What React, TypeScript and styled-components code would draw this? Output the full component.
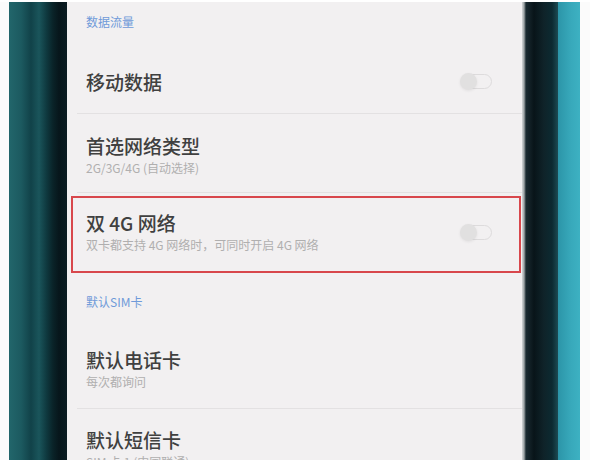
import React from "react";
import styled, { createGlobalStyle } from "styled-components";

const GlobalStyle = createGlobalStyle`
  html, body { margin: 0; padding: 0; background: #fff; }
  body { font-family: "Noto Sans CJK SC", "Noto Sans", sans-serif; }
  #root { width: 590px; height: 460px; overflow: hidden; }
`;

const Page = styled.div`
  width: 590px;
  height: 460px;
  box-sizing: border-box;
  padding-top: 2px;
  display: flex;
  background: #fff;
  overflow: hidden;
`;

const WhiteStrip = styled.div<{ $w: number }>`
  flex: none;
  width: ${(p) => p.$w}px;
  background: #fbfbfb;
`;

const LeftBezel = styled.div`
  flex: none;
  width: 58px;
  background: linear-gradient(
    to right,
    #22666b 0px,
    #1c5a60 12px,
    #114249 22px,
    #1a555b 30px,
    #0e373d 38px,
    #0a2328 44px,
    #07161b 50px,
    #0b1c22 58px
  );
`;

const RightBezel = styled.div`
  flex: none;
  width: 36px;
  background: linear-gradient(
    to right,
    #d4d7d8 0px,
    #9ea4a6 2px,
    #1a2a30 4px,
    #081419 12px,
    #0f2329 22px,
    #0c2a31 30px,
    #1c4a52 36px
  );
`;

const TealEdge = styled.div`
  flex: none;
  width: 22px;
  background: linear-gradient(to right, #2c95a8, #38a9bb 60%, #3db1c2);
`;

const Screen = styled.div`
  flex: none;
  width: 455px;
  background: #f2f0f1;
  display: flex;
  flex-direction: column;
  overflow: hidden;
`;

const SectionHeader = styled.div<{ $height: number; $top: number }>`
  box-sizing: border-box;
  height: ${(p) => p.$height}px;
  padding: ${(p) => p.$top}px 0 0 19px;
  font-size: 12px;
  line-height: 16px;
  color: #6f9ad9;
  flex: none;
`;

const Row = styled.div<{ $height?: number; $top?: number; $bottom?: number }>`
  flex: none;
  box-sizing: border-box;
  display: flex;
  align-items: center;
  margin-left: 10px;
  padding: ${(p) => p.$top ?? 0}px 30px ${(p) => p.$bottom ?? 0}px 9px;
  ${(p) => (p.$height ? `height: ${p.$height}px;` : "")}
  border-bottom: 1px solid #e3e1e2;
`;

const HighlightRow = styled.div`
  flex: none;
  box-sizing: border-box;
  display: flex;
  align-items: center;
  height: 77px;
  margin: 3px 1px 0 4px;
  padding: 13px 27px 18px 13px;
  border: 2px solid #d8474c;
`;

const RowText = styled.div`
  flex: 1;
  display: flex;
  flex-direction: column;
`;

const Title = styled.div`
  font-size: 19px;
  line-height: 24px;
  font-weight: 500;
  color: #404040;
  white-space: nowrap;
`;

const Sub = styled.div`
  margin-top: 2px;
  font-size: 12px;
  line-height: 16px;
  color: #b0afaf;
  white-space: nowrap;
`;

const Track = styled.div`
  flex: none;
  position: relative;
  width: 31px;
  height: 15px;
  box-sizing: border-box;
  border: 1px solid #dddbdc;
  border-radius: 8px;
`;

const Knob = styled.div`
  position: absolute;
  left: -2px;
  top: -2px;
  width: 17px;
  height: 17px;
  border-radius: 50%;
  background: #e1e0e0;
  box-shadow: 0 1px 3px rgba(0, 0, 0, 0.07);
`;

const Toggle = () => (
  <Track>
    <Knob />
  </Track>
);

export default function App() {
  return (
    <>
      <GlobalStyle />
      <Page>
        <WhiteStrip $w={9} />
        <LeftBezel />
        <Screen>
          <SectionHeader $height={48} $top={12}>
            数据流量
          </SectionHeader>
          <Row $height={64}>
            <RowText>
              <Title>移动数据</Title>
            </RowText>
            <Toggle />
          </Row>
          <Row $top={20} $bottom={16}>
            <RowText>
              <Title>首选网络类型</Title>
              <Sub>2G/3G/4G (自动选择)</Sub>
            </RowText>
          </Row>
          <HighlightRow>
            <RowText>
              <Title>双 4G 网络</Title>
              <Sub>双卡都支持 4G 网络时，可同时开启 4G 网络</Sub>
            </RowText>
            <Toggle />
          </HighlightRow>
          <SectionHeader $height={57} $top={21}>
            默认SIM卡
          </SectionHeader>
          <Row $top={18} $bottom={18}>
            <RowText>
              <Title>默认电话卡</Title>
              <Sub>每次都询问</Sub>
            </RowText>
          </Row>
          <Row $top={19} $bottom={17}>
            <RowText>
              <Title>默认短信卡</Title>
              <Sub>SIM 卡 1 (中国联通)</Sub>
            </RowText>
          </Row>
        </Screen>
        <RightBezel />
        <TealEdge />
        <WhiteStrip $w={10} />
      </Page>
    </>
  );
}
